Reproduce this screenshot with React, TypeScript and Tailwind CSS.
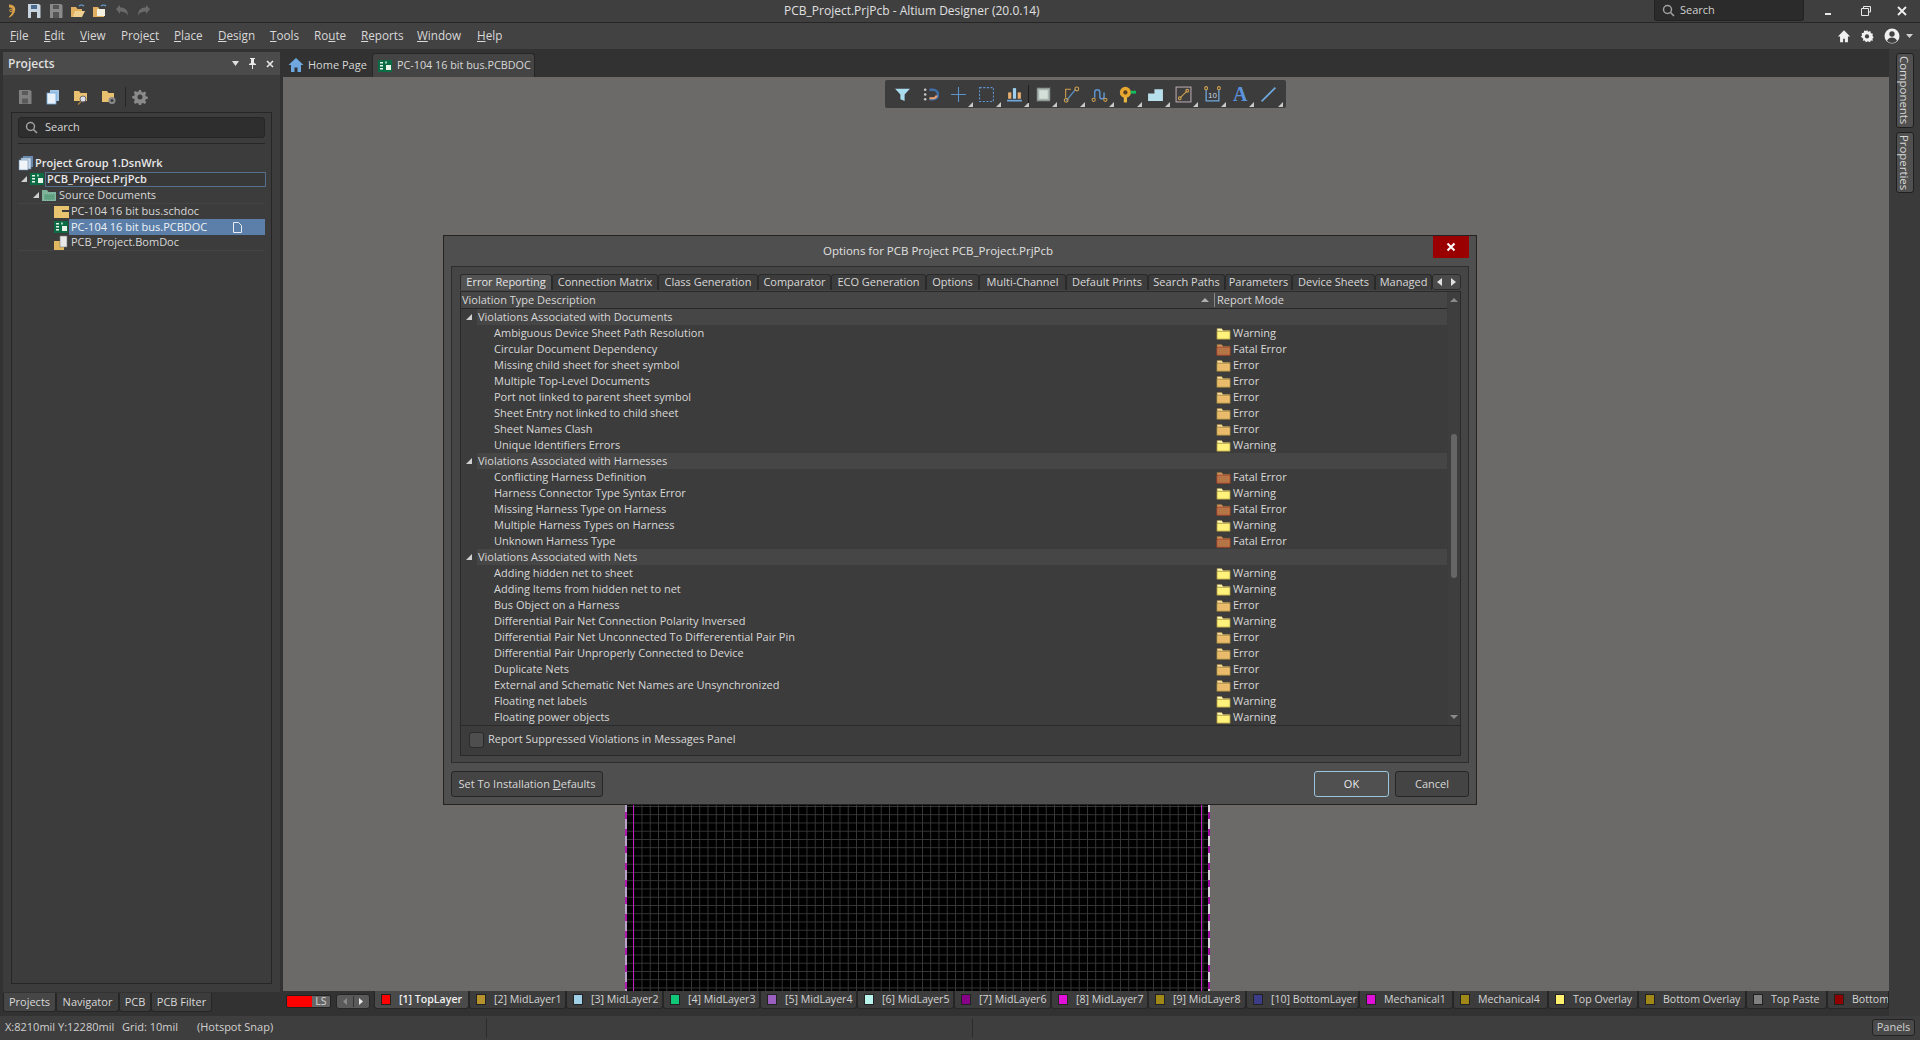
// App.tsx
// Altium Designer window with the "Options for PCB Project" dialog on top
import type { ReactNode } from 'react';

const FONT = "font-['Open_Sans','Noto_Sans',sans-serif]";

type Mode = 'W' | 'E' | 'F';
type Row = { name: string; mode: Mode };
type Group = { title: string; rows: Row[] };

const groups: Group[] = [
  {
    title: 'Violations Associated with Documents',
    rows: [
      { name: 'Ambiguous Device Sheet Path Resolution', mode: 'W' },
      { name: 'Circular Document Dependency', mode: 'F' },
      { name: 'Missing child sheet for sheet symbol', mode: 'E' },
      { name: 'Multiple Top-Level Documents', mode: 'E' },
      { name: 'Port not linked to parent sheet symbol', mode: 'E' },
      { name: 'Sheet Entry not linked to child sheet', mode: 'E' },
      { name: 'Sheet Names Clash', mode: 'E' },
      { name: 'Unique Identifiers Errors', mode: 'W' },
    ],
  },
  {
    title: 'Violations Associated with Harnesses',
    rows: [
      { name: 'Conflicting Harness Definition', mode: 'F' },
      { name: 'Harness Connector Type Syntax Error', mode: 'W' },
      { name: 'Missing Harness Type on Harness', mode: 'F' },
      { name: 'Multiple Harness Types on Harness', mode: 'W' },
      { name: 'Unknown Harness Type', mode: 'F' },
    ],
  },
  {
    title: 'Violations Associated with Nets',
    rows: [
      { name: 'Adding hidden net to sheet', mode: 'W' },
      { name: 'Adding Items from hidden net to net', mode: 'W' },
      { name: 'Bus Object on a Harness', mode: 'E' },
      { name: 'Differential Pair Net Connection Polarity Inversed', mode: 'W' },
      { name: 'Differential Pair Net Unconnected To Differerential Pair Pin', mode: 'E' },
      { name: 'Differential Pair Unproperly Connected to Device', mode: 'E' },
      { name: 'Duplicate Nets', mode: 'E' },
      { name: 'External and Schematic Net Names are Unsynchronized', mode: 'E' },
      { name: 'Floating net labels', mode: 'W' },
      { name: 'Floating power objects', mode: 'W' },
    ],
  },
];

const modeLabel: Record<Mode, string> = { W: 'Warning', E: 'Error', F: 'Fatal Error' };

const dialogTabs = [
  { label: 'Error Reporting', w: 'w-[92px]', active: true },
  { label: 'Connection Matrix', w: 'w-[106px]' },
  { label: 'Class Generation', w: 'w-[100px]' },
  { label: 'Comparator', w: 'w-[73px]' },
  { label: 'ECO Generation', w: 'w-[95px]' },
  { label: 'Options', w: 'w-[53px]' },
  { label: 'Multi-Channel', w: 'w-[87px]' },
  { label: 'Default Prints', w: 'w-[82px]' },
  { label: 'Search Paths', w: 'w-[77px]' },
  { label: 'Parameters', w: 'w-[67px]' },
  { label: 'Device Sheets', w: 'w-[83px]' },
  { label: 'Managed', w: 'w-[57px]' },
];

const layers = [
  { label: '[1] TopLayer', w: 'w-[95px]', color: 'bg-[#ff0000]', active: true },
  { label: '[2] MidLayer1', w: 'w-[97px]', color: 'bg-[#b5922e]' },
  { label: '[3] MidLayer2', w: 'w-[97px]', color: 'bg-[#9fd0e8]' },
  { label: '[4] MidLayer3', w: 'w-[97px]', color: 'bg-[#10c878]' },
  { label: '[5] MidLayer4', w: 'w-[97px]', color: 'bg-[#9a60c0]' },
  { label: '[6] MidLayer5', w: 'w-[97px]', color: 'bg-[#b8f4ec]' },
  { label: '[7] MidLayer6', w: 'w-[97px]', color: 'bg-[#880088]' },
  { label: '[8] MidLayer7', w: 'w-[97px]', color: 'bg-[#e010d8]' },
  { label: '[9] MidLayer8', w: 'w-[98px]', color: 'bg-[#a08818]' },
  { label: '[10] BottomLayer', w: 'w-[113px]', color: 'bg-[#3c3c88]' },
  { label: 'Mechanical1', w: 'w-[94px]', color: 'bg-[#e010d8]' },
  { label: 'Mechanical4', w: 'w-[95px]', color: 'bg-[#a08818]' },
  { label: 'Top Overlay', w: 'w-[90px]', color: 'bg-[#fff070]' },
  { label: 'Bottom Overlay', w: 'w-[108px]', color: 'bg-[#a08818]' },
  { label: 'Top Paste', w: 'w-[81px]', color: 'bg-[#808080]' },
  { label: 'Bottom', w: 'w-[62px]', color: 'bg-[#900000]' },
];

const Svg = ({ size = 16, children }: { size?: number; children: ReactNode }) => (
  <svg width={size} height={size} viewBox="0 0 16 16" className="block shrink-0">
    {children}
  </svg>
);

// report mode folders in the violations list
const ModeFolder = ({ mode }: { mode: Mode }) => {
  const fill = mode === 'W' ? '#fff27a' : mode === 'E' ? '#ecc070' : '#b8794a';
  const top = mode === 'W' ? '#fff9b0' : mode === 'E' ? '#f4d898' : '#c89060';
  return (
    <Svg size={15}>
      <path d="M1 2.500h5l1.500 2h7.500v9.500H1z" fill={top} stroke="#6b5a2a" strokeWidth="0.6" />
      <rect x="1" y="5.500" width="14" height="8.500" fill={fill} stroke={mode === 'F' ? '#a83020' : '#8a7430'} strokeWidth="0.7" />
      {mode !== 'W' && <path d="M3 8h10M3 10h10M3 12h10" stroke={mode === 'E' ? '#dca858' : '#a06838'} strokeWidth="0.7" strokeDasharray="1 1" />}
    </Svg>
  );
};

const PcbIcon = () => (
  <Svg>
    <rect x="1" y="2" width="14" height="12" fill="#0b6b45" />
    <rect x="3" y="4" width="3" height="1.500" fill="#e8f4e8" />
    <rect x="3" y="7" width="3" height="1.500" fill="#e8f4e8" />
    <rect x="3" y="10" width="3" height="1.500" fill="#e8f4e8" />
    <rect x="9" y="7" width="5" height="5" fill="#e8f4e8" />
    <rect x="8" y="3.500" width="2" height="2" fill="#9fd0b8" />
  </Svg>
);

const TreeArrow = () => (
  <svg width="6" height="6" viewBox="0 0 6 6" className="block shrink-0">
    <path d="M6 0v6H0z" fill="#d0d0d0" />
  </svg>
);

const CornerMark = () => (
  <svg width="5" height="5" viewBox="0 0 5 5" className="absolute right-0 bottom-[1px]">
    <path d="M5 0v5H0z" fill="#c8c8c8" />
  </svg>
);

const toolbarIcons: { el: ReactNode; mark?: boolean; sep?: boolean; glyph?: boolean }[] = [
  { el: <path d="M1 2.500h14l-5 5.500v6l-4-1.500V8z" fill="#a8dcee" /> },
  {
    el: (
      <>
        <path d="M7 3.500h3.500a4.500 4.500 0 0 1 0 9H7" fill="none" stroke="#3f6ea8" strokeWidth="2.400" />
        <path d="M7 11.500h3.500a3.500 3.500 0 0 0 3.300-2.500" fill="none" stroke="#e8a070" strokeWidth="2" />
        <circle cx="3" cy="3.500" r="1.200" fill="#c8c8c8" />
        <circle cx="3" cy="8" r="1.200" fill="#c8c8c8" />
        <circle cx="3" cy="12.500" r="1.200" fill="#c8c8c8" />
      </>
    ),
  },
  { mark: true, el: <path d="M8 1v14M1 8h14" stroke="#5d93cc" strokeWidth="1" /> },
  { mark: true, el: <rect x="1.500" y="1.500" width="13" height="13" fill="none" stroke="#5d93cc" strokeDasharray="2 1.400" /> },
  {
    mark: true,
    sep: true,
    el: (
      <>
        <rect x="2" y="6" width="3" height="6" fill="#e8b070" />
        <rect x="6.500" y="2" width="3" height="10" fill="#9fd0ee" />
        <rect x="11" y="6" width="3" height="6" fill="#e8b070" />
        <rect x="1" y="13" width="14" height="1.600" fill="#6fa8dc" />
      </>
    ),
  },
  {
    mark: true,
    el: (
      <>
        <rect x="2" y="2" width="12" height="12" fill="#a8b8b0" stroke="#8a8a8a" strokeDasharray="1 0.600" />
        <rect x="4" y="4" width="8" height="8" fill="#d4dfda" />
      </>
    ),
  },
  {
    mark: true,
    el: (
      <>
        <path d="M3 14l9-11" stroke="#5d93cc" strokeWidth="1.200" />
        <path d="M2.500 11V3h5" fill="none" stroke="#d0a050" strokeWidth="1" />
        <circle cx="3" cy="13.500" r="1.800" fill="none" stroke="#d0a050" />
        <circle cx="13" cy="2.800" r="1.800" fill="none" stroke="#d0a050" />
      </>
    ),
  },
  {
    mark: true,
    el: (
      <>
        <path d="M3 11V6a2.400 2.400 0 0 1 4.800 0v4a2 2 0 0 0 4 0V6" transform="translate(0.5 0)" fill="none" stroke="#5d93cc" strokeWidth="1.400" />
        <circle cx="2.500" cy="13" r="1.500" fill="none" stroke="#d0a050" />
        <circle cx="13.500" cy="13" r="1.500" fill="none" stroke="#d0a050" />
      </>
    ),
  },
  {
    mark: true,
    el: (
      <>
        <circle cx="6" cy="6" r="5.200" fill="#e8a830" />
        <circle cx="6" cy="6" r="2" fill="#5a4020" />
        <rect x="4.500" y="10.500" width="3" height="5" fill="#e8b840" />
        <rect x="11" y="4.500" width="5" height="2.600" fill="#10c060" />
      </>
    ),
  },
  { mark: true, el: <path d="M1 7h6V3h8v11H1z" fill="#b8e0ec" /> },
  {
    mark: true,
    el: (
      <>
        <rect x="1" y="1" width="14" height="14" fill="#3e3e3e" stroke="#b8a8b0" strokeWidth="1" />
        <path d="M4.500 11.500l7-7" stroke="#d0a050" strokeWidth="1" />
        <circle cx="4.500" cy="11.500" r="1.300" fill="none" stroke="#d0a050" />
        <circle cx="11.500" cy="4.500" r="1.300" fill="none" stroke="#d0a050" />
      </>
    ),
  },
  {
    mark: true,
    el: (
      <>
        <path d="M2 3v11h12V3" fill="none" stroke="#6fa8dc" strokeWidth="1.200" />
        <circle cx="2" cy="2" r="1.400" fill="none" stroke="#d0a050" />
        <circle cx="14" cy="2" r="1.400" fill="none" stroke="#d0a050" />
        <text x="8" y="11.500" textAnchor="middle" fontSize="7.500" fill="#c8d8e8" fontFamily="Liberation Sans">10</text>
      </>
    ),
  },
  {
    mark: true,
    glyph: true,
    el: <span className="font-['Liberation_Serif',serif] text-[20px] font-bold leading-none text-[#5d93dc]">A</span>,
  },
  { mark: true, el: <path d="M1.500 14.500l13-13" stroke="#6fa8dc" strokeWidth="1.600" /> },
];

const Menu = () => {
  const items: [string, string, string, string][] = [
    ['', 'F', 'ile', 'w-[34px]'],
    ['', 'E', 'dit', 'w-[36px]'],
    ['', 'V', 'iew', 'w-[41px]'],
    ['Proje', 'c', 't', 'w-[53px]'],
    ['', 'P', 'lace', 'w-[44px]'],
    ['', 'D', 'esign', 'w-[52px]'],
    ['', 'T', 'ools', 'w-[44px]'],
    ['Ro', 'u', 'te', 'w-[47px]'],
    ['', 'R', 'eports', 'w-[56px]'],
    ['', 'W', 'indow', 'w-[60px]'],
    ['', 'H', 'elp', 'w-[40px]'],
  ];
  return (
    <div className="flex pl-[10px] text-[11.700px] text-[#d8d8d8]">
      {items.map(([a, u, b, w]) => (
        <span key={a + u + b} className={w}>
          {a}
          <span className="underline">{u}</span>
          {b}
        </span>
      ))}
    </div>
  );
};

const SearchGlass = () => (
  <svg width="13" height="13" viewBox="0 0 13 13" className="block shrink-0">
    <circle cx="5.500" cy="5.500" r="4" fill="none" stroke="#a0a0a0" strokeWidth="1.500" />
    <path d="M8.500 8.500l3.500 3.500" stroke="#a0a0a0" strokeWidth="1.600" />
  </svg>
);

const TitleBar = () => (
  <div className="flex h-[23px] shrink-0 items-center border-b border-[#262626] bg-[#3f3f3f]">
    <div className="flex w-[784px] items-center pl-[4px] gap-[6px]">
      <Svg>
        <path d="M5 1.500c5 0 7 3 6 6.500-1 3-3 6-6.500 6.500 2-2.500 3.500-4 4-6.500.3-2-1-4-3.500-3.500z" fill="#d9a24a" />
        <circle cx="7" cy="7.500" r="1.300" fill="none" stroke="#d9a24a" />
      </Svg>
      <Svg>
        <path d="M2 1h11l1.500 1.500V15H2z" fill="#c8d4e0" />
        <rect x="5" y="2" width="6" height="4" fill="#4a6a90" />
        <rect x="5" y="9" width="6" height="6" fill="#3f3f3f" />
      </Svg>
      <Svg>
        <path d="M2 1h11l1.500 1.500V15H2z" fill="#8a8a8a" />
        <rect x="5" y="2" width="6" height="4" fill="#555" />
        <rect x="5" y="9" width="6" height="6" fill="#555" />
      </Svg>
      <Svg>
        <path d="M1 4h5l1.500 2H12v8H1z" fill="#e0b060" />
        <path d="M3 14l2-6h10l-3 6z" fill="#f0d090" />
        <path d="M9 3a4 4 0 0 1 5 0" fill="none" stroke="#6fa8dc" strokeWidth="1.200" />
      </Svg>
      <Svg>
        <path d="M1 4h5l1.500 2H12v8H1z" fill="#e0b060" />
        <rect x="5" y="6" width="8" height="7" fill="#f4f0e0" />
        <path d="M9 3a4 4 0 0 1 5 0" fill="none" stroke="#6fa8dc" strokeWidth="1.200" />
      </Svg>
      <Svg>
        <path d="M2 6l4-4v2.500c5 0 8 2.500 8 8-1.500-3-4-4-8-4V11z" fill="#6a6a6a" />
      </Svg>
      <Svg>
        <path d="M14 6l-4-4v2.500c-5 0-8 2.500-8 8 1.500-3 4-4 8-4V11z" fill="#6a6a6a" />
      </Svg>
    </div>
    <div className="w-[870px] text-[12px] text-[#e0e0e0]">PCB_Project.PrjPcb - Altium Designer (20.0.14)</div>
    <div className="flex h-[21px] w-[150px] items-center gap-[5px] self-start rounded-b-[3px] border border-t-0 border-[#222] bg-[#2b2b2b] pl-[7px] text-[11px] text-[#d0d0d0]">
      <SearchGlass />
      <span>Search</span>
    </div>
    <div className="flex flex-1 items-center pl-[20px] gap-[24px]">
      <svg width="12" height="12" viewBox="0 0 12 12" className="block">
        <rect x="1" y="8" width="6" height="2" fill="#e8e8e8" />
      </svg>
      <svg width="12" height="12" viewBox="0 0 12 12" className="block">
        <path d="M3.500 3.500V1.500h7v5.500H8.500M1.500 3.500h7v7h-7z" fill="none" stroke="#e8e8e8" />
      </svg>
      <svg width="12" height="12" viewBox="0 0 12 12" className="block">
        <path d="M2 2l8 8M10 2l-8 8" stroke="#f0f0f0" strokeWidth="1.800" />
      </svg>
    </div>
  </div>
);

const MenuBar = () => (
  <div className="flex h-[26px] shrink-0 items-center bg-[#424242]">
    <Menu />
    <div className="ml-auto flex items-center gap-[9px] pr-[7px]">
      <Svg size={14}>
        <path d="M8 1.500L1 8.500h2.500V15h3.500v-4h2v4h3.500V8.500H15z" fill="#f0f0f0" />
      </Svg>
      <Svg size={14}>
        <path d="M8 1l1.400 2 2.400-.6.6 2.400 2.400.6-.6 2.400 1.400 1.600-1.400 1.600.6 2.400-2.400-.4-1 2-2.400-1-2.400 1-1-2-2.400.4.600-2.400L1 8.800l1.400-1.600-.6-2.400 2.400-.6.6-2.400 2.400.6z" fill="#f0f0f0" />
        <circle cx="8" cy="8.500" r="2.400" fill="#424242" />
      </Svg>
      <svg width="16" height="16" viewBox="0 0 16 16" className="ml-[1px] mr-[-3px] block">
        <circle cx="8" cy="8" r="7.500" fill="#f0f0f0" />
        <circle cx="8" cy="6" r="2.700" fill="#424242" />
        <path d="M3 13c1-3 3-3.500 5-3.500s4 .5 5 3.500c-1.500 1.300-3 2-5 2s-3.500-.7-5-2z" fill="#424242" />
      </svg>
      <svg width="7" height="4" viewBox="0 0 7 4" className="block">
        <path d="M0 0h7L3.500 4z" fill="#d0d0d0" />
      </svg>
    </div>
  </div>
);

const TreeRow = ({
  indent,
  arrow,
  icon,
  label,
  className,
  textClass,
}: {
  indent: string;
  arrow?: boolean;
  icon: ReactNode;
  label: string;
  className?: string;
  textClass?: string;
}) => (
  <div className={`flex h-[16px] items-center ${indent} ${className ?? ''}`}>
    <div className="flex w-[8px] justify-start">{arrow && <TreeArrow />}</div>
    <div className="w-[16px]">{icon}</div>
    <span className={`pl-[1px] ${textClass ?? ''}`}>{label}</span>
  </div>
);

const LeftPanel = () => (
  <div className="flex w-[283px] shrink-0 flex-col bg-[#323232] pl-[3px] pt-[3px]">
    <div className="flex h-[940px] w-[277px] flex-col bg-[#3c3c3c]">
      <div className="flex h-[23px] items-center bg-[#4b4b4b] pl-[5px] pr-[6px] text-[12px] font-semibold text-[#e0e0e0]">
        <span>Projects</span>
        <div className="ml-auto flex items-center gap-[9px]">
          <svg width="7" height="5" viewBox="0 0 7 5" className="block">
            <path d="M0 0h7L3.500 5z" fill="#e0e0e0" />
          </svg>
          <svg width="9" height="11" viewBox="0 0 9 11" className="block">
            <path d="M2 0h5v1H6v4l2 1v1H5v4H4V7H1V6l2-1V1H2z" fill="#e8e8e8" />
          </svg>
          <svg width="8" height="8" viewBox="0 0 8 8" className="block">
            <path d="M1 1l6 6M7 1L1 7" stroke="#e8e8e8" strokeWidth="1.600" />
          </svg>
        </div>
      </div>
      <div className="flex h-[37px] items-center gap-[12px] pl-[14px] pt-[6px]">
        <Svg>
          <path d="M2 1h11l1.500 1.500V15H2z" fill="#808080" />
          <rect x="5" y="2" width="6" height="4" fill="#5a5a5a" />
          <rect x="5" y="9.500" width="6" height="5" fill="#5a5a5a" />
        </Svg>
        <Svg>
          <rect x="5" y="1" width="9" height="11" fill="#9fc4e4" />
          <rect x="2" y="4" width="9" height="11" fill="#e8f0f8" stroke="#6fa8dc" strokeWidth="0.800" />
        </Svg>
        <Svg>
          <path d="M1 2h5l1.500 2H14v8H1z" fill="#e8c070" />
          <circle cx="10" cy="10" r="3" fill="#dde" stroke="#6a6a6a" />
          <path d="M8 12.500l-3 3" stroke="#a08040" strokeWidth="1.500" />
        </Svg>
        <Svg>
          <path d="M1 2h5l1.500 2H13v9H1z" fill="#e8c070" />
          <circle cx="11" cy="11.500" r="3.500" fill="#8a8a8a" />
          <circle cx="11" cy="11.500" r="1.500" fill="#3c3c3c" />
        </Svg>
        <div className="ml-[-4px] mr-[-6px] h-[20px] w-px bg-[#252525]" />
        <Svg>
          <path d="M7 1h2l.5 2 1.500.6 1.800-1 1.400 1.400-1 1.800.6 1.500 2 .5v2l-2 .5-.6 1.500 1 1.800-1.400 1.400-1.800-1-1.500.6-.5 2H7l-.5-2-1.500-.6-1.800 1L1.800 13l1-1.800L2.200 9.700l-2-.5v-2l2-.5.6-1.500-1-1.800L3.200 2l1.800 1 1.500-.6z" fill="#8a8a8a" />
          <circle cx="8" cy="8" r="2.500" fill="#3c3c3c" />
        </Svg>
      </div>
      <div className="mx-[8px] flex h-[872px] flex-col border border-[#262626] bg-[#3c3c3c] px-[6px] text-[11px] text-[#d8d8d8]">
        <div className="mt-[4px] flex h-[21px] shrink-0 items-center gap-[7px] rounded-[3px] border border-[#262626] bg-[#2e2e2e] pl-[6px]">
          <SearchGlass />
          <span className="mt-[-1px]">Search</span>
        </div>
        <div className="mt-[5px] h-px shrink-0 bg-[#262626]" />
        <div className="mt-[11px] flex flex-col">
          <div className="flex h-[16px] items-center font-semibold text-[#e8e8e8]">
            <Svg>
              <rect x="5" y="1" width="10" height="11" fill="#6a8ab0" />
              <rect x="3" y="3" width="10" height="11" fill="#c8d8e8" stroke="#6a8ab0" strokeWidth="0.600" />
              <rect x="1" y="5" width="9" height="10" fill="#f0f4f8" stroke="#6a8ab0" strokeWidth="0.600" />
            </Svg>
            <span className="pl-[1px]">Project Group 1.DsnWrk</span>
          </div>
          <TreeRow
            indent="pl-[3px]"
            arrow
            icon={<PcbIcon />}
            label="PCB_Project.PrjPcb"
            className="mr-[-1px] font-semibold"
            textClass="flex h-[15px] flex-1 items-center border border-[#56708c] bg-[#383838] pl-[1px] text-[#e8e8e8]"
          />
          <TreeRow
            indent="pl-[15px]"
            arrow
            icon={
              <Svg>
                <path d="M1 3h5l1.500 2H15v9H1z" fill="#7fb09a" />
                <rect x="3" y="7" width="11" height="6" fill="#5fa080" stroke="#a8d0c0" strokeDasharray="1 1" strokeWidth="0.500" />
              </Svg>
            }
            label="Source Documents"
            className="[&>span]:pl-[2px]"
          />
          <div className="flex h-[16px] items-center border-t border-[#444] pl-[35px]">
            <Svg>
              <rect x="1" y="2" width="15" height="12" fill="#e8c470" />
              <rect x="9" y="6" width="7" height="2" fill="#3c3c3c" />
            </Svg>
            <span className="pl-[2px]">PC-104 16 bit bus.schdoc</span>
          </div>
          <div className="flex h-[16px] items-center pl-[35px]">
            <PcbIcon />
            <div className="flex h-[16px] flex-1 items-center bg-[#5b7fa8] pl-[2px] text-[#eef2f6]">
              <span>PC-104 16 bit bus.PCBDOC</span>
              <svg width="9" height="11" viewBox="0 0 9 11" className="ml-auto mr-[23px] block">
                <path d="M.5.500h5l3 3v7H.5z" fill="none" stroke="#e8eef4" />
              </svg>
            </div>
          </div>
          <div className="flex h-[16px] items-center border-b border-[#444] pl-[35px]">
            <Svg>
              <rect x="1" y="6" width="10" height="9" fill="#e0b860" />
              <rect x="7" y="1" width="7" height="11" fill="#e8e8e8" stroke="#777" strokeWidth="0.600" />
            </Svg>
            <span className="pl-[2px]">PCB_Project.BomDoc</span>
          </div>
        </div>
      </div>
    </div>
    <div className="mt-[1px] flex h-[19px] text-[11px] text-[#d8d8d8]">
      <div className="flex w-[53px] items-center justify-center rounded-b-[3px] border border-t-0 border-[#262626] bg-[#464646]">Projects</div>
      <div className="flex w-[63px] items-center justify-center rounded-b-[3px] border border-t-0 border-[#262626] bg-[#3c3c3c]">Navigator</div>
      <div className="flex w-[32px] items-center justify-center rounded-b-[3px] border border-t-0 border-[#262626] bg-[#3c3c3c]">PCB</div>
      <div className="flex w-[61px] items-center justify-center rounded-b-[3px] border border-t-0 border-[#262626] bg-[#3c3c3c]">PCB Filter</div>
    </div>
  </div>
);

const DocTabs = () => (
  <div className="flex h-[28px] shrink-0 items-end bg-[#323232] text-[11px] text-[#d8d8d8]">
    <div className="flex h-[24px] w-[89px] items-center gap-[4px] pl-[5px]">
      <Svg>
        <path d="M8 1L.5 8H3v7h3.500v-4.500h3V15H13V8h2.500z" fill="#6fa8e0" />
      </Svg>
      <span>Home Page</span>
    </div>
    <div className="flex h-[24px] w-[163px] items-center gap-[4px] rounded-t-[3px] border border-b-0 border-[#262626] bg-[#444] pl-[4px] text-[10.800px]">
      <PcbIcon />
      <span>PC-104 16 bit bus.PCBDOC</span>
    </div>
  </div>
);

const Canvas = () => (
  <div className="relative flex-1 overflow-hidden bg-[#6b6a69]">
    {/* board, only its lower part shows under the dialog */}
    <div className="absolute bottom-0 left-[342px] top-[300px] w-[585px] bg-black bg-[linear-gradient(#383838_1px,transparent_1px),linear-gradient(90deg,#383838_1px,transparent_1px)] bg-[size:8.250px_8.250px]">
      <div className="absolute inset-y-0 left-0 w-[2px] bg-[repeating-linear-gradient(180deg,#b8a0c8_0_10px,#b018b0_10px_17px)]" />
      <div className="absolute inset-y-0 left-[8px] w-px bg-[#c020c0]" />
      <div className="absolute inset-y-0 right-[8px] w-px bg-[#c020c0]" />
      <div className="absolute inset-y-0 right-0 w-[2px] bg-[repeating-linear-gradient(180deg,#d8d0d8_0_10px,#a010a0_10px_17px)]" />
    </div>

    {/* floating toolbar */}
    <div className="absolute left-[602px] top-[3px] flex h-[28px] w-[401px] items-center rounded-[2px] bg-[#3c3c3c] pl-[3px]">
      {toolbarIcons.map((t, i) => (
        <div key={i} className="relative flex h-[28px] w-[28.200px] items-center justify-center">
          {t.glyph ? t.el : <Svg size={17}>{t.el}</Svg>}
          {t.mark && <CornerMark />}
          {t.sep && <div className="absolute right-0 top-[5px] h-[18px] w-px bg-[#1f1f1f]" />}
        </div>
      ))}
    </div>

    {/* options dialog */}
    <div className="absolute left-[160px] top-[158px] flex h-[570px] w-[1034px] flex-col border border-[#222] bg-[#4f4f4f] text-[11px] text-[#d8d8d8]">
      <div className="relative flex h-[30px] shrink-0 items-center justify-center pr-[44px] text-[11.500px] text-[#e0e0e0]">
        <span>Options for PCB Project PCB_Project.PrjPcb</span>
        <div className="absolute right-[7px] top-0 flex h-[22px] w-[36px] items-center justify-center bg-[#9b0000]">
          <svg width="10" height="10" viewBox="0 0 10 10" className="block">
            <path d="M1.500 1.500l7 7M8.500 1.500l-7 7" stroke="#fff" strokeWidth="2" />
          </svg>
        </div>
      </div>
      <div className="mx-[7px] flex h-[497px] shrink-0 flex-col border border-[#2d2d2d] bg-[#454545] pl-[8px] pr-[7px] pt-[7px]">
        <div className="flex h-[17px] shrink-0 pb-[1px]">
          {dialogTabs.map((t) => (
            <div
              key={t.label}
              className={`flex ${t.w} items-center justify-center overflow-hidden rounded-t-[3px] border border-b-0 border-[#2a2a2a] ${t.active ? 'bg-[#525252] text-[#e4e4e4]' : 'bg-[#3c3c3c]'}`}
            >
              {t.label}
            </div>
          ))}
          <div className="flex w-[29px] items-center justify-around rounded-[3px] border border-[#2a2a2a] bg-[#4a4a4a]">
            <svg width="5" height="8" viewBox="0 0 5 8" className="block">
              <path d="M5 0v8L0 4z" fill="#e0e0e0" />
            </svg>
            <svg width="5" height="8" viewBox="0 0 5 8" className="block">
              <path d="M0 0v8l5-4z" fill="#e0e0e0" />
            </svg>
          </div>
        </div>
        <div className="flex h-[465px] w-[1001px] flex-col border border-[#2a2a2a] bg-[#3c3c3c]">
          <div className="flex h-[434px] border-b border-[#2a2a2a]">
            <div className="flex w-[986px] flex-col overflow-hidden">
              <div className="flex h-[17px] shrink-0 items-center border-b border-[#262626] bg-[#464646] pl-[1px]">
                <span className="w-[739px]">Violation Type Description</span>
                <svg width="8" height="4" viewBox="0 0 8 4" className="block">
                  <path d="M4 0l4 4H0z" fill="#b0b0b0" />
                </svg>
                <span className="ml-[5px] h-[14px] w-px bg-[#8a8a8a]" />
                <span className="pl-[2px]">Report Mode</span>
              </div>
              {groups.map((g) => (
                <div key={g.title}>
                  <div className="flex h-[16px] items-center">
                    <div className="flex w-[16px] justify-end pr-[5px]">
                      <TreeArrow />
                    </div>
                    <div className="flex h-[16px] flex-1 items-center bg-[#464646] pl-[1px]">{g.title}</div>
                  </div>
                  {g.rows.map((r) => (
                    <div key={r.name} className="flex h-[16px] items-center pl-[33px]">
                      <span className="w-[722px]">{r.name}</span>
                      <ModeFolder mode={r.mode} />
                      <span className="pl-[2px]">{modeLabel[r.mode]}</span>
                    </div>
                  ))}
                </div>
              ))}
            </div>
            <div className="flex w-[13px] flex-col items-center justify-between border-l border-[#3c3c3c] bg-[#3e3e3e] py-[6px]">
              <svg width="8" height="4" viewBox="0 0 8 4" className="block">
                <path d="M4 0l4 4H0z" fill="#8a8a8a" />
              </svg>
              <div className="mb-[137px] mt-[132px] w-[6px] flex-1 rounded-[3px] bg-[#666]" />
              <svg width="8" height="4" viewBox="0 0 8 4" className="block">
                <path d="M0 0h8L4 4z" fill="#8a8a8a" />
              </svg>
            </div>
          </div>
          <div className="flex flex-1 items-center pl-[8px] pb-[2px]">
            <div className="h-[16px] w-[15px] rounded-[3px] border border-[#2a2a2a] bg-[#4e4e4e]" />
            <span className="pl-[4px]">Report Suppressed Violations in Messages Panel</span>
          </div>
        </div>
      </div>
      <div className="mx-[7px] mt-[8px] flex h-[26px] shrink-0">
        <div className="flex w-[152px] items-center justify-center rounded-[3px] border border-[#262626] bg-[#444]">
          <span>
            Set To Installation <span className="underline">D</span>efaults
          </span>
        </div>
        <div className="ml-auto flex w-[75px] items-center justify-center rounded-[3px] border border-[#9cc4dc] bg-[#505050] text-[#e8e8e8]">OK</div>
        <div className="ml-[6px] flex w-[74px] items-center justify-center rounded-[3px] border border-[#262626] bg-[#444]">Cancel</div>
      </div>
    </div>
  </div>
);

const LayerBar = () => (
  <div className="flex h-[25px] shrink-0 bg-[#323232] text-[10.600px] text-[#d4d4d4]">
    <div className="ml-[3px] mt-[4px] flex h-[13px] w-[45px] overflow-hidden rounded-[2px] border border-[#222]">
      <div className="w-[25px] bg-[#ff0000]" />
      <div className="flex flex-1 items-center justify-center bg-[#666]">LS</div>
    </div>
    <div className="ml-[5px] mt-[3px] flex h-[15px] w-[34px] items-center justify-between rounded-[3px] border border-[#262626] bg-[#5a5a5a] px-[6px]">
      <svg width="4" height="7" viewBox="0 0 4 7" className="block">
        <path d="M4 0v7L0 3.500z" fill="#8a8a8a" />
      </svg>
      <span className="h-[11px] w-px bg-[#333]" />
      <svg width="4" height="7" viewBox="0 0 4 7" className="block">
        <path d="M0 0v7l4-3.500z" fill="#e8e8e8" />
      </svg>
    </div>
    <div className="ml-[4px] flex h-[18px]">
      {layers.map((l) => (
        <div
          key={l.label}
          className={`flex ${l.w} shrink-0 items-center overflow-hidden rounded-b-[3px] border border-t-0 border-[#262626] pl-[6px] whitespace-nowrap ${l.active ? 'bg-[#4a4a4a] font-semibold text-[#f0f0f0]' : 'bg-[#3c3c3c]'}`}
        >
          <span className={`mr-[8px] h-[11px] w-[10px] shrink-0 border border-[#222] ${l.color}`} />
          <span className="mt-[1px]">{l.label}</span>
        </div>
      ))}
    </div>
  </div>
);

const RightStrip = () => (
  <div className="flex w-[31px] shrink-0 flex-col items-center gap-[4px] bg-[#3a3a3a] pt-[4px] text-[11.400px] text-[#d8d8d8]">
    <div className="flex h-[75px] w-[18px] items-center justify-center rounded-[3px] border border-[#1f1f1f] bg-[#505050] [writing-mode:vertical-rl]">Components</div>
    <div className="flex h-[61px] w-[18px] items-center justify-center rounded-[3px] border border-[#1f1f1f] bg-[#505050] [writing-mode:vertical-rl]">Properties</div>
  </div>
);

const StatusBar = () => (
  <div className="flex h-[24px] shrink-0 items-center bg-[#3e3e3e] pb-[1px] pl-[5px] text-[11px] text-[#d0d0d0]">
    <span className="w-[117px]">X:8210mil Y:12280mil</span>
    <span className="w-[75px]">Grid: 10mil</span>
    <span className="w-[289px]">(Hotspot Snap)</span>
    <div className="h-[20px] w-px bg-[#2c2c2c]" />
    <div className="ml-[485px] h-[20px] w-px bg-[#2c2c2c]" />
    <div className="ml-auto mr-[5px] flex h-[17px] w-[43px] items-center justify-center rounded-[3px] border border-[#222] bg-[#4a4a4a]">Panels</div>
  </div>
);

export default function App() {
  return (
    <div className={`flex h-[1040px] w-[1920px] flex-col overflow-hidden bg-[#323232] ${FONT}`}>
      <TitleBar />
      <MenuBar />
      <div className="flex min-h-0 flex-1">
        <LeftPanel />
        <div className="flex min-w-0 flex-1 flex-col">
          <DocTabs />
          <Canvas />
          <LayerBar />
        </div>
        <RightStrip />
      </div>
      <StatusBar />
    </div>
  );
}
